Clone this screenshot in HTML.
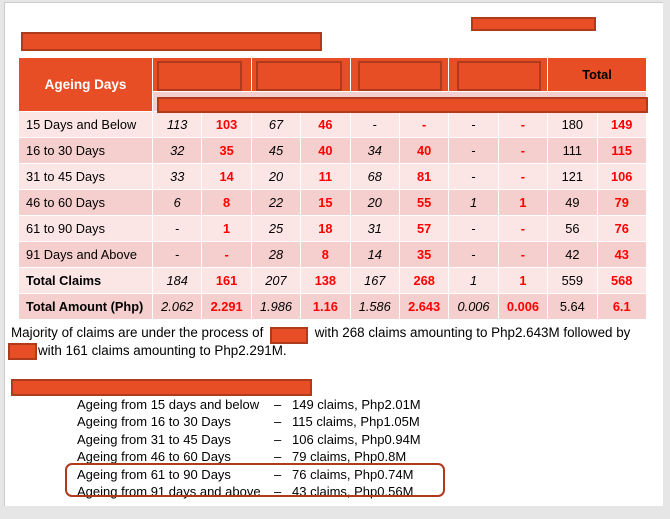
<!DOCTYPE html><html><head><style>
body{margin:0;width:670px;height:519px;background:#e6e6e6;position:relative;overflow:hidden;font-family:"Liberation Sans",sans-serif;}
.page{position:absolute;left:4px;top:2px;width:658px;height:503px;background:#fff;border-left:1px solid #ccc;border-top:1px solid #ccc}
.r{position:absolute;background:#e84e25;border:2px solid #b03a1c;box-sizing:border-box}
table{position:absolute;left:18px;top:57px;border-collapse:collapse;font-size:12.8px;table-layout:fixed}
td{border:1px solid #fff;text-align:center;height:25px;padding:0}
td.l{text-align:left;padding-left:7px}
.a td{background:#fbe6e5}.b td{background:#f4cfcd}
.i{font-style:italic}.x{color:#f00;font-weight:bold}
.h{background:#e84e25;color:#fff;font-weight:bold}
.t{position:absolute;font-size:13.4px;color:#000;white-space:nowrap}
</style></head><body>
<div class="page"></div>
<div class="r" style="left:471px;top:17px;width:125px;height:14px"></div>
<div class="r" style="left:21px;top:32px;width:301px;height:19px"></div>
<table>
<colgroup><col style="width:134px"><col span="10" style="width:49.4px"></colgroup>
<tr><td rowspan="2" class="h" style="font-size:13.5px;height:auto">Ageing Days</td><td colspan="2" class="h" style="height:33px"></td><td colspan="2" class="h"></td><td colspan="2" class="h"></td><td colspan="2" class="h"></td><td colspan="2" class="h" style="color:#000">Total</td></tr>
<tr><td style="background:#f4cfcd;height:19px" colspan="10"></td></tr>
<tr class="a"><td class="l">15 Days and Below</td><td class="i">113</td><td class="x">103</td><td class="i">67</td><td class="x">46</td><td>-</td><td class="x">-</td><td>-</td><td class="x">-</td><td>180</td><td class="x">149</td></tr>
<tr class="b"><td class="l">16 to 30 Days</td><td class="i">32</td><td class="x">35</td><td class="i">45</td><td class="x">40</td><td class="i">34</td><td class="x">40</td><td>-</td><td class="x">-</td><td>111</td><td class="x">115</td></tr>
<tr class="a"><td class="l">31 to 45 Days</td><td class="i">33</td><td class="x">14</td><td class="i">20</td><td class="x">11</td><td class="i">68</td><td class="x">81</td><td>-</td><td class="x">-</td><td>121</td><td class="x">106</td></tr>
<tr class="b"><td class="l">46 to 60 Days</td><td class="i">6</td><td class="x">8</td><td class="i">22</td><td class="x">15</td><td class="i">20</td><td class="x">55</td><td class="i">1</td><td class="x">1</td><td>49</td><td class="x">79</td></tr>
<tr class="a"><td class="l">61 to 90 Days</td><td>-</td><td class="x">1</td><td class="i">25</td><td class="x">18</td><td class="i">31</td><td class="x">57</td><td>-</td><td class="x">-</td><td>56</td><td class="x">76</td></tr>
<tr class="b"><td class="l">91 Days and Above</td><td>-</td><td class="x">-</td><td class="i">28</td><td class="x">8</td><td class="i">14</td><td class="x">35</td><td>-</td><td class="x">-</td><td>42</td><td class="x">43</td></tr>
<tr class="a"><td class="l" style="font-weight:bold">Total Claims</td><td class="i">184</td><td class="x">161</td><td class="i">207</td><td class="x">138</td><td class="i">167</td><td class="x">268</td><td class="i">1</td><td class="x">1</td><td>559</td><td class="x">568</td></tr>
<tr class="b"><td class="l" style="font-weight:bold">Total Amount (Php)</td><td class="i">2.062</td><td class="x">2.291</td><td class="i">1.986</td><td class="x">1.16</td><td class="i">1.586</td><td class="x">2.643</td><td class="i">0.006</td><td class="x">0.006</td><td>5.64</td><td class="x">6.1</td></tr>
</table>
<div class="r" style="left:157px;top:61px;width:85px;height:30px"></div>
<div class="r" style="left:256px;top:61px;width:86px;height:30px"></div>
<div class="r" style="left:358px;top:61px;width:84px;height:30px"></div>
<div class="r" style="left:457px;top:61px;width:84px;height:30px"></div>
<div class="r" style="left:157px;top:97px;width:491px;height:16px"></div>
<div class="t" style="left:11px;top:325px">Majority of claims are under the process of <span style="display:inline-block;width:44px"></span> with 268 claims amounting to Php2.643M followed by</div>
<div class="t" style="left:38px;top:343px">with 161 claims amounting to Php2.291M.</div>
<div class="r" style="left:270px;top:327px;width:38px;height:17px"></div>
<div class="r" style="left:8px;top:343px;width:29px;height:17px"></div>
<div class="r" style="left:11px;top:379px;width:301px;height:17px"></div>
<div class="t" style="left:77px;top:396px;line-height:17.4px;font-size:13px">Ageing from 15 days and below<br>Ageing from 16 to 30 Days<br>Ageing from 31 to 45 Days<br>Ageing from 46 to 60 Days<br>Ageing from 61 to 90 Days<br>Ageing from 91 days and above</div>
<div class="t" style="left:274px;top:396px;line-height:17.4px;font-size:13px">–<br>–<br>–<br>–<br>–<br>–</div>
<div class="t" style="left:292px;top:396px;line-height:17.4px;font-size:13px">149 claims, Php2.01M<br>115 claims, Php1.05M<br>106 claims, Php0.94M<br>79 claims, Php0.8M<br>76 claims, Php0.74M<br>43 claims, Php0.56M</div>
<div style="position:absolute;left:65px;top:463px;width:380px;height:34px;border:2px solid #b03a1c;border-radius:7px;box-sizing:border-box"></div>
</body></html>
